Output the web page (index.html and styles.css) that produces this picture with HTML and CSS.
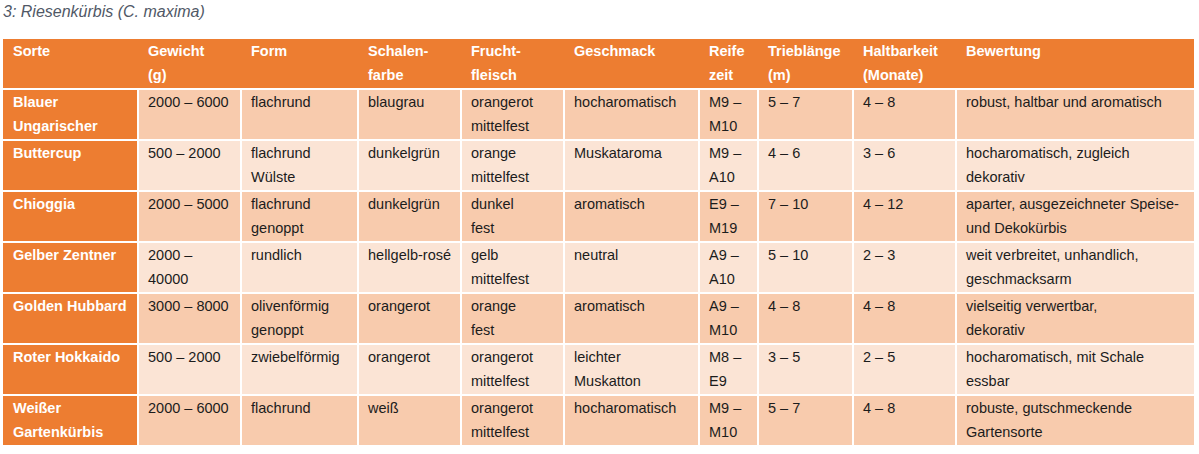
FILE: index.html
```html
<!DOCTYPE html>
<html lang="de">
<head>
<meta charset="utf-8">
<title>Riesenkürbis</title>
<link rel="stylesheet" href="styles.css">
</head>
<body>
<p class="caption">3: Riesenkürbis (C. maxima)</p>
<table class="sorten">
  <colgroup>
    <col class="c1"><col class="c2"><col class="c3"><col class="c4"><col class="c5">
    <col class="c6"><col class="c7"><col class="c8"><col class="c9"><col class="c10">
  </colgroup>
  <thead>
    <tr>
      <th>Sorte</th>
      <th>Gewicht<br>(g)</th>
      <th>Form</th>
      <th>Schalen-<br>farbe</th>
      <th>Frucht-<br>fleisch</th>
      <th>Geschmack</th>
      <th>Reife<br>zeit</th>
      <th>Trieblänge<br>(m)</th>
      <th>Haltbarkeit<br>(Monate)</th>
      <th>Bewertung</th>
    </tr>
  </thead>
  <tbody>
    <tr class="dark">
      <th>Blauer<br>Ungarischer</th>
      <td>2000 – 6000</td>
      <td>flachrund</td>
      <td>blaugrau</td>
      <td>orangerot<br>mittelfest</td>
      <td>hocharomatisch</td>
      <td>M9 –<br>M10</td>
      <td>5 – 7</td>
      <td>4 – 8</td>
      <td>robust, haltbar und aromatisch</td>
    </tr>
    <tr class="light">
      <th>Buttercup</th>
      <td>500 – 2000</td>
      <td>flachrund<br>Wülste</td>
      <td>dunkelgrün</td>
      <td>orange<br>mittelfest</td>
      <td>Muskataroma</td>
      <td>M9 –<br>A10</td>
      <td>4 – 6</td>
      <td>3 – 6</td>
      <td>hocharomatisch, zugleich<br>dekorativ</td>
    </tr>
    <tr class="dark">
      <th>Chioggia</th>
      <td>2000 – 5000</td>
      <td>flachrund<br>genoppt</td>
      <td>dunkelgrün</td>
      <td>dunkel<br>fest</td>
      <td>aromatisch</td>
      <td>E9 –<br>M19</td>
      <td>7 – 10</td>
      <td>4 – 12</td>
      <td>aparter, ausgezeichneter Speise-<br>und Dekokürbis</td>
    </tr>
    <tr class="light">
      <th>Gelber Zentner</th>
      <td>2000 –<br>40000</td>
      <td>rundlich</td>
      <td>hellgelb-rosé</td>
      <td>gelb<br>mittelfest</td>
      <td>neutral</td>
      <td>A9 –<br>A10</td>
      <td>5 – 10</td>
      <td>2 – 3</td>
      <td>weit verbreitet, unhandlich,<br>geschmacksarm</td>
    </tr>
    <tr class="dark">
      <th>Golden Hubbard</th>
      <td>3000 – 8000</td>
      <td>olivenförmig<br>genoppt</td>
      <td>orangerot</td>
      <td>orange<br>fest</td>
      <td>aromatisch</td>
      <td>A9 –<br>M10</td>
      <td>4 – 8</td>
      <td>4 – 8</td>
      <td>vielseitig verwertbar,<br>dekorativ</td>
    </tr>
    <tr class="light">
      <th>Roter Hokkaido</th>
      <td>500 – 2000</td>
      <td>zwiebelförmig</td>
      <td>orangerot</td>
      <td>orangerot<br>mittelfest</td>
      <td>leichter<br>Muskatton</td>
      <td>M8 –<br>E9</td>
      <td>3 – 5</td>
      <td>2 – 5</td>
      <td>hocharomatisch, mit Schale<br>essbar</td>
    </tr>
    <tr class="dark">
      <th>Weißer<br>Gartenkürbis</th>
      <td>2000 – 6000</td>
      <td>flachrund</td>
      <td>weiß</td>
      <td>orangerot<br>mittelfest</td>
      <td>hocharomatisch</td>
      <td>M9 –<br>M10</td>
      <td>5 – 7</td>
      <td>4 – 8</td>
      <td>robuste, gutschmeckende<br>Gartensorte</td>
    </tr>
  </tbody>
</table>
</body>
</html>
```

FILE: styles.css
```css
html, body {
  margin: 0;
  padding: 0;
  background: #ffffff;
}

body {
  padding: 3px 5px 0 3px;
  font-family: "Liberation Sans", Arial, sans-serif;
}

.caption {
  margin: 0 0 18px 0;
  font-size: 16px;
  line-height: 18px;
  font-style: italic;
  color: #505866;
}

.sorten {
  table-layout: fixed;
  width: 1191px;
  border-collapse: separate;
  border-spacing: 0;
  font-size: 14.5px;
  line-height: 24px;
  color: #1c1c1c;
}

.c1 { width: 134px; }
.c2 { width: 103px; }
.c3 { width: 117px; }
.c4 { width: 103px; }
.c5 { width: 103px; }
.c6 { width: 135px; }
.c7 { width: 59px; }
.c8 { width: 95px; }
.c9 { width: 103px; }
.c10 { width: 239px; }

.sorten th,
.sorten td {
  text-align: left;
  vertical-align: top;
  white-space: nowrap;
  padding: 0 0 1px 9px;
  height: 48px;
  box-sizing: content-box;
  overflow: hidden;
}

.sorten th {
  font-weight: bold;
  color: #ffffff;
  background: #ed7d31;
}

.sorten thead th {
  border-left: 2px solid #ed7d31;
}

.sorten thead th:first-child,
.sorten tbody th {
  border-left: 0;
  padding-left: 10px;
}

.sorten tbody th,
.sorten tbody td {
  border-top: 2px solid #ffffff;
}

.sorten tbody td {
  border-left: 2px solid #ffffff;
}

.sorten tr.dark td {
  background: #f8cbad;
}

.sorten tr.light td {
  background: #fbe4d5;
}
```
